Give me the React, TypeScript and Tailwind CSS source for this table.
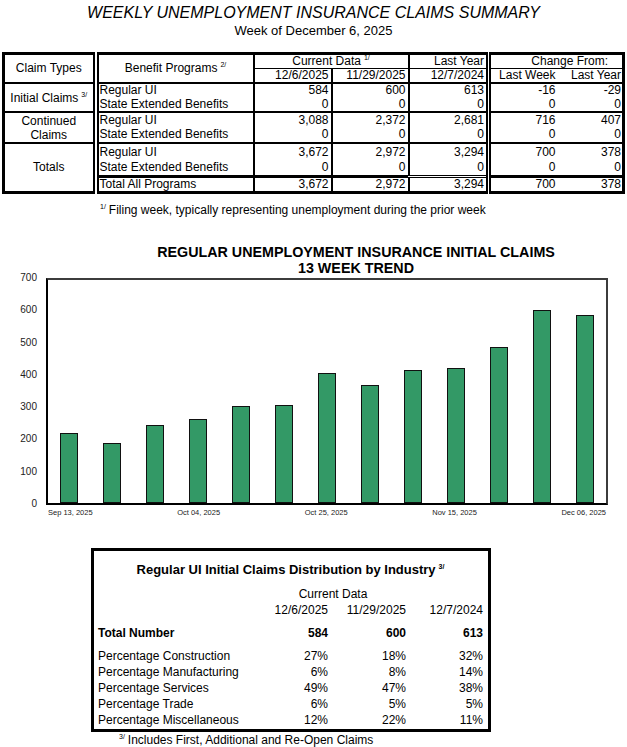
import { FC, ReactNode } from 'react';

const Sup: FC<{ children: ReactNode }> = ({ children }) => (
  <sup className="ml-[3px] text-[7px] top-[-5px]">{children}</sup>
);

interface Section {
  label: ReactNode;
  rows: string[][];
}

const sections: Section[] = [
  {
    label: (
      <>
        Initial Claims<Sup>3/</Sup>
      </>
    ),
    rows: [
      ['Regular UI', '584', '600', '613', '-16', '-29'],
      ['State Extended Benefits', '0', '0', '0', '0', '0'],
    ],
  },
  {
    label: (
      <>
        Continued
        <br />
        Claims
      </>
    ),
    rows: [
      ['Regular UI', '3,088', '2,372', '2,681', '716', '407'],
      ['State Extended Benefits', '0', '0', '0', '0', '0'],
    ],
  },
  {
    label: 'Totals',
    rows: [
      ['Regular UI', '3,672', '2,972', '3,294', '700', '378'],
      ['State Extended Benefits', '0', '0', '0', '0', '0'],
      ['Total All Programs', '3,672', '2,972', '3,294', '700', '378'],
    ],
  },
];

const rowHeights = [[14, 15], [15, 16], [17, 16, 15]];

// weekly initial claims, oldest first
const bars = [218, 187, 243, 263, 301, 306, 403, 368, 415, 420, 485, 600, 584];
const ticks = [700, 600, 500, 400, 300, 200, 100, 0];
const xLabels: Record<number, string> = {
  0: 'Sep 13, 2025',
  3: 'Oct 04, 2025',
  6: 'Oct 25, 2025',
  9: 'Nov 15, 2025',
  12: 'Dec 06, 2025',
};

const industry = [
  ['Percentage Construction', '27%', '18%', '32%'],
  ['Percentage Manufacturing', '6%', '8%', '14%'],
  ['Percentage Services', '49%', '47%', '38%'],
  ['Percentage Trade', '6%', '5%', '5%'],
  ['Percentage Miscellaneous', '12%', '22%', '11%'],
];

const DistRow: FC<{ cells: string[]; bold?: boolean; className?: string }> = ({ cells, bold, className = '' }) => (
  <div className={`grid grid-cols-[162px_68px_78px_77px] ${bold ? 'font-bold' : ''} ${className}`}>
    <div>{cells[0]}</div>
    <div className="text-right">{cells[1]}</div>
    <div className="text-right">{cells[2]}</div>
    <div className="text-right">{cells[3]}</div>
  </div>
);

export default function App() {
  return (
    <div className="w-[627px] h-[747px] bg-white text-black font-['Liberation_Sans',Arial,sans-serif] overflow-hidden">
      {/* Heading */}
      <div className="mt-[2px] text-center italic text-[16px] leading-[18px] pt-[2px]">
        WEEKLY UNEMPLOYMENT INSURANCE CLAIMS SUMMARY
      </div>
      <div className="mt-[1px] text-center text-[13px] leading-[16px]">Week of December 6, 2025</div>

      {/* Summary table */}
      <table className="mt-[13px] ml-[2px] w-[623px] table-fixed border-collapse border-[3px] border-black text-[12px] leading-[13px]">
        <colgroup>
          <col className="w-[92px]" />
          <col className="w-[158px]" />
          <col className="w-[78px]" />
          <col className="w-[77px]" />
          <col className="w-[80px]" />
          <col className="w-[69px]" />
          <col className="w-[66px]" />
        </colgroup>
        <thead>
          <tr className="h-[15px]">
            <td rowSpan={2} className="border-r-[6px] border-double border-black text-center">
              Claim Types
            </td>
            <td rowSpan={2} className="border-r-2 border-black text-center">
              Benefit Programs<Sup>2/</Sup>
            </td>
            <td colSpan={2} className="border-r-2 border-b border-black text-center">
              Current Data<Sup>1/</Sup>
            </td>
            <td className="border-r-[5px] border-b border-double border-black text-right pr-[2px]">Last Year</td>
            <td colSpan={2} className="border-b border-black text-right pr-[14px]">
              Change From:
            </td>
          </tr>
          <tr className="h-[14px]">
            <td className="border-r-2 border-black text-right pr-[2px]">12/6/2025</td>
            <td className="border-r-2 border-black text-right pr-[2px]">11/29/2025</td>
            <td className="border-r-[5px] border-double border-black text-right pr-[2px]">12/7/2024</td>
            <td className="text-right pr-[2px]">Last Week</td>
            <td className="text-right pr-[1px]">Last Year</td>
          </tr>
        </thead>
        <tbody>
          {sections.map((s, si) =>
            s.rows.map((r, ri) => {
              const top = ri === 0 ? 'border-t-2' : ri === 2 ? 'border-t-[3px]' : '';
              return (
                <tr key={`${si}-${ri}`} style={{ height: rowHeights[si][ri] }}>
                  {ri === 0 && (
                    <td
                      rowSpan={s.rows.length}
                      className="border-t-2 border-r-[6px] border-double border-black text-center leading-[14px]"
                    >
                      {s.label}
                    </td>
                  )}
                  <td className={`${top} border-r-2 border-black pl-[1px] whitespace-nowrap`}>{r[0]}</td>
                  <td className={`${top} border-r-2 border-black text-right pr-[2px]`}>{r[1]}</td>
                  <td className={`${top} border-r-2 border-black text-right pr-[2px]`}>{r[2]}</td>
                  <td className={`${top} border-r-[5px] border-double border-black text-right pr-[2px]`}>{r[3]}</td>
                  <td className={`${top} border-black text-right pr-[2px]`}>{r[4]}</td>
                  <td className={`${top} border-black text-right pr-[1px]`}>{r[5]}</td>
                </tr>
              );
            })
          )}
        </tbody>
      </table>

      <div className="mt-[9px] pl-[100px] text-[12px] leading-[14px]">
        <sup className="text-[7px] top-[-5px] mr-[3px]">1/</sup>Filing week, typically representing unemployment during
        the prior week
      </div>

      {/* Chart */}
      <div className="mt-[27px] pl-[85px] text-center font-bold text-[14.3px] leading-[16px]">
        <div>REGULAR UNEMPLOYMENT INSURANCE INITIAL CLAIMS</div>
        <div>13 WEEK TREND</div>
      </div>

      <div className="mt-[2px] flex">
        <div className="w-[46px] h-[226px] flex flex-col justify-between pr-[9px] text-[10px] text-[#222]">
          {ticks.map((t) => (
            <div key={t} className="h-0 flex items-center justify-end">
              {t}
            </div>
          ))}
        </div>
        <div className="w-[562px] h-[227px] flex items-end border-2 border-[#3c3c3c] border-l-black border-b-black">
          {bars.map((v, i) => (
            <div key={i} className="flex-1 flex justify-center">
              <div
                className="w-[18px] border-[1.5px] border-[#111] bg-[#339966]"
                style={{ height: (v * 226) / 700 - 1 }}
              />
            </div>
          ))}
        </div>
      </div>
      <div className="mt-[3px] ml-[48px] w-[558px] flex text-[7.5px] leading-[10px] text-[#222]">
        {bars.map((_, i) => (
          <div key={i} className="flex-1 flex justify-center whitespace-nowrap">
            {xLabels[i] ?? ''}
          </div>
        ))}
      </div>

      {/* Industry distribution */}
      <div className="mt-[30px] ml-[91px] w-[400px] border-[3px] border-black pt-[11px] pb-[1px] pl-[4px] pr-[5px]">
        <div className="text-center font-bold text-[13px] leading-[16px]">
          Regular UI Initial Claims Distribution by Industry<Sup>3/</Sup>
        </div>
        <div className="mt-[8px] text-[12px] leading-[16px]">
          <div className="grid grid-cols-[162px_146px_77px]">
            <div />
            <div className="text-center">Current Data</div>
            <div />
          </div>
          <DistRow cells={['', '12/6/2025', '11/29/2025', '12/7/2024']} />
          <DistRow cells={['Total Number', '584', '600', '613']} bold className="mt-[7px]" />
          <div className="mt-[7px]">
            {industry.map((r) => (
              <DistRow key={r[0]} cells={r} />
            ))}
          </div>
        </div>
      </div>
      <div className="mt-[1px] pl-[119px] text-[12px] leading-[14px]">
        <sup className="text-[7px] top-[-5px] mr-[3px]">3/</sup>Includes First, Additional and Re-Open Claims
      </div>
    </div>
  );
}
